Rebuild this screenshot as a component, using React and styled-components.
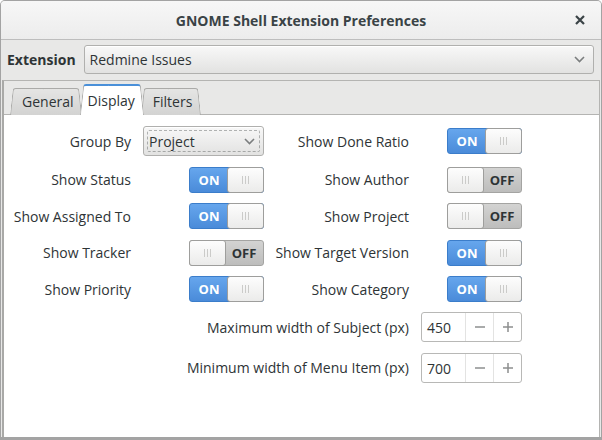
import React from 'react';
import styled, { createGlobalStyle } from 'styled-components';

const GlobalStyle = createGlobalStyle`
  html, body {
    margin: 0;
    padding: 0;
    background: #ffffff;
  }
  body {
    font-family: "Open Sans", "DejaVu Sans", sans-serif;
    font-size: 14px;
    color: #2e3436;
  }
`;

const Window = styled.div`
  width: 602px;
  height: 440px;
  box-sizing: border-box;
  display: flex;
  flex-direction: column;
  background: #e8e8e7;
  border: 1px solid #a3a3a3;
  border-bottom-width: 3px;
  border-radius: 5px 5px 0 0;
  overflow: hidden;
`;

const TitleBar = styled.div`
  flex: none;
  height: 38px;
  display: grid;
  grid-template-columns: 1fr auto 1fr;
  align-items: center;
  background: linear-gradient(#f7f7f7, #ececec);
  border-bottom: 1px solid #bdbdbd;
`;

const Title = styled.div`
  grid-column: 2;
  font-weight: bold;
  font-size: 14px;
  color: #3a4346;
`;

const CloseButton = styled.div`
  justify-self: end;
  margin-right: 16px;
  display: flex;
  align-items: center;
`;

const Toolbar = styled.div`
  flex: none;
  display: flex;
  align-items: center;
  gap: 8px;
  padding: 5px 7px 6px 6px;
`;

const ToolLabel = styled.span`
  font-weight: bold;
  color: #2e3436;
`;

const Combo = styled.div`
  position: relative;
  box-sizing: border-box;
  height: ${p => p.$height}px;
  width: ${p => (p.$width ? `${p.$width}px` : 'auto')};
  flex: ${p => (p.$width ? 'none' : '1')};
  display: flex;
  align-items: center;
  justify-content: space-between;
  padding: 0 8px 0 5px;
  border: 1px solid #b0b0ae;
  border-radius: 3px;
  background: linear-gradient(#f8f8f8, #e2e2e1);
  box-shadow: inset 0 1px #ffffff;
`;

const FocusRing = styled.span`
  position: absolute;
  inset: 3px;
  border: 1px dashed rgba(46, 52, 54, 0.35);
  border-radius: 2px;
  pointer-events: none;
`;

const Notebook = styled.div`
  flex: 1;
  display: flex;
  flex-direction: column;
  margin: 0 1px 0 1px;
  border: 1px solid #b4b4b2;
  border-left: 2px solid #a9a9a7;
  border-bottom: none;
`;

const TabStrip = styled.div`
  flex: none;
  height: 34px;
  display: flex;
  align-items: flex-end;
  padding-left: 6px;
  position: relative;
  z-index: 1;
  margin-bottom: -1px;
`;

const Tab = styled.div`
  position: relative;
  z-index: ${p => (p.$active ? 3 : 1)};
  height: ${p => (p.$active ? 31 : 27)}px;
  box-sizing: border-box;
  padding: ${p => (p.$active ? '0 9px 0 8px' : '0 9px 0 12px')};
  margin-right: -3px;
  display: flex;
  align-items: center;
  padding-top: ${p => (p.$active ? 2 : 0)}px;
  color: #2e3436;

  &::before,
  &::after {
    content: '';
    position: absolute;
    top: 0;
    bottom: 0;
    width: 50%;
    z-index: -1;
    box-sizing: border-box;
    background: ${p => (p.$active ? '#ffffff' : 'linear-gradient(#e5e5e4, #d3d3d2)')};
    border-top: ${p => (p.$active ? '2px solid #4a90d9' : '1px solid #aaaaa8')};
    transform-origin: bottom;
  }

  &::before {
    left: 0;
    border-left: 1px solid #aaaaa8;
    border-top-left-radius: 3px;
    transform: skewX(-6deg);
  }

  &::after {
    right: 0;
    border-right: 1px solid #aaaaa8;
    border-top-right-radius: 3px;
    transform: skewX(6deg);
  }
`;

const Page = styled.div`
  flex: 1;
  background: #ffffff;
  border-top: 1px solid #b4b4b2;
`;

const Grid = styled.div`
  display: grid;
  grid-template-columns: 118px 121px 133px 101px;
  grid-template-rows: 30px 27px 26px 27px 26px 30px 31px;
  column-gap: 12px;
  row-gap: 10px;
  align-items: center;
  padding: 11px 0 0 9px;
`;

const Label = styled.span`
  justify-self: end;
  grid-column: ${p => p.$span || 'auto'};
  white-space: nowrap;
`;

const Control = styled.div`
  justify-self: end;
  align-self: ${p => p.$align || 'center'};
  display: flex;
`;

const SwitchBox = styled.div`
  width: 75px;
  height: 26px;
  box-sizing: border-box;
  display: flex;
  flex-direction: ${p => (p.$on ? 'row' : 'row-reverse')};
  border: 1px solid ${p => (p.$on ? '#3b7dca' : '#a4a4a2')};
  border-radius: 3px;
  background: ${p =>
    p.$on ? 'linear-gradient(#66a6ed, #4a8bd9)' : 'linear-gradient(#d3d3d2, #bdbdbc)'};
`;

const SwitchText = styled.span`
  flex: 1;
  display: flex;
  align-items: center;
  justify-content: center;
  font-weight: bold;
  font-size: 13px;
  color: ${p => (p.$on ? '#ffffff' : '#2e3436')};
`;

const Knob = styled.span`
  width: 37px;
  margin: -1px;
  box-sizing: border-box;
  display: flex;
  align-items: center;
  justify-content: center;
  gap: 2px;
  border: 1px solid #9e9e9c;
  border-radius: 3px;
  background: linear-gradient(#fdfdfd, #ebebea);
`;

const Grip = styled.span`
  width: 1px;
  height: 8px;
  background: #cbcbc9;
`;

const Spin = styled.div`
  width: 101px;
  height: 30px;
  box-sizing: border-box;
  display: flex;
  border: 1px solid #b8b8b6;
  border-radius: 3px;
  background: #ffffff;
`;

const SpinEntry = styled.span`
  width: 43px;
  padding-left: 5px;
  box-sizing: border-box;
  display: flex;
  align-items: center;
`;

const SpinButton = styled.span`
  flex: 1;
  display: flex;
  align-items: center;
  justify-content: center;
  border-left: 1px solid #e3e3e2;
`;

const Chevron = () => (
  <svg width="11" height="7" viewBox="0 0 11 7">
    <polyline points="1,1 5.5,5.5 10,1" fill="none" stroke="#7b7e7f" strokeWidth="1.6" />
  </svg>
);

const CloseIcon = () => (
  <svg width="10" height="10" viewBox="0 0 10 10">
    <path d="M1 1 L9 9 M9 1 L1 9" stroke="#3a4346" strokeWidth="2.2" />
  </svg>
);

const MinusIcon = () => (
  <svg width="12" height="12" viewBox="0 0 12 12">
    <path d="M1 6 H11" stroke="#8d8f8f" strokeWidth="1.5" />
  </svg>
);

const PlusIcon = () => (
  <svg width="12" height="12" viewBox="0 0 12 12">
    <path d="M1 6 H11 M6 1 V11" stroke="#8d8f8f" strokeWidth="1.5" />
  </svg>
);

const Switch = ({ on }) => (
  <SwitchBox $on={on}>
    <SwitchText $on={on}>{on ? 'ON' : 'OFF'}</SwitchText>
    <Knob>
      <Grip />
      <Grip />
      <Grip />
    </Knob>
  </SwitchBox>
);

const SpinButtonField = ({ value }) => (
  <Spin>
    <SpinEntry>{value}</SpinEntry>
    <SpinButton><MinusIcon /></SpinButton>
    <SpinButton><PlusIcon /></SpinButton>
  </Spin>
);

const rows = [
  ['Show Status', true, 'Show Author', false],
  ['Show Assigned To', true, 'Show Project', false],
  ['Show Tracker', false, 'Show Target Version', true],
  ['Show Priority', true, 'Show Category', true],
];

const spins = [
  ['Maximum width of Subject (px)', 450],
  ['Minimum width of Menu Item (px)', 700],
];

export default function App() {
  return (
    <>
      <GlobalStyle />
      <Window>
        <TitleBar>
          <Title>GNOME Shell Extension Preferences</Title>
          <CloseButton><CloseIcon /></CloseButton>
        </TitleBar>
        <Toolbar>
          <ToolLabel>Extension</ToolLabel>
          <Combo $height={29}>
            <span>Redmine Issues</span>
            <Chevron />
          </Combo>
        </Toolbar>
        <Notebook>
          <TabStrip>
            <Tab>General</Tab>
            <Tab $active>Display</Tab>
            <Tab>Filters</Tab>
          </TabStrip>
          <Page>
            <Grid>
              <Label>Group By</Label>
              <Control>
                <Combo $height={30} $width={121}>
                  <FocusRing />
                  <span>Project</span>
                  <Chevron />
                </Combo>
              </Control>
              <Label>Show Done Ratio</Label>
              <Control><Switch on /></Control>

              {rows.map(([l1, v1, l2, v2]) => (
                <React.Fragment key={l1}>
                  <Label>{l1}</Label>
                  <Control><Switch on={v1} /></Control>
                  <Label>{l2}</Label>
                  <Control><Switch on={v2} /></Control>
                </React.Fragment>
              ))}

              {spins.map(([label, value], i) => (
                <React.Fragment key={label}>
                  <Label $span="1 / 4">{label}</Label>
                  <Control $align={i === 1 ? 'end' : 'center'}>
                    <SpinButtonField value={value} />
                  </Control>
                </React.Fragment>
              ))}
            </Grid>
          </Page>
        </Notebook>
      </Window>
    </>
  );
}
